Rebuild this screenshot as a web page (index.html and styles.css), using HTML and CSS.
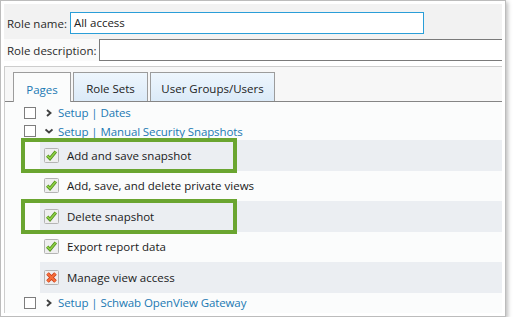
FILE: index.html
```html
<!DOCTYPE html>
<html lang="en">
<head>
<meta charset="UTF-8">
<title>Role editor</title>
<link rel="stylesheet" href="styles.css">
</head>
<body>
<div class="frame">
  <div class="field-row name-row">
    <span class="field-label">Role name:</span>
    <div class="text-input focused">All access</div>
  </div>
  <div class="field-row desc-row">
    <span class="field-label">Role description:</span>
    <div class="text-input wide"></div>
  </div>

  <div class="panel">
    <div class="tabs">
      <div class="tab active tab-pages">Pages</div>
      <div class="tab tab-sets">Role Sets</div>
      <div class="tab tab-groups">User Groups/Users</div>
    </div>

    <div class="tree">
      <div class="node first">
        <span class="box"></span>
        <svg class="chev" width="8" height="8" viewBox="0 0 8 8"><path d="M2 1 L5.5 4 L2 7" fill="none" stroke="#404040" stroke-width="1.9"/></svg>
        <span class="link">Setup | Dates</span>
      </div>
      <div class="node second">
        <span class="box"></span>
        <svg class="chev" width="8" height="8" viewBox="0 0 8 8"><path d="M0.5 2.5 L4 5.5 L7.5 2.5" fill="none" stroke="#404040" stroke-width="1.9"/></svg>
        <span class="link">Setup | Manual Security Snapshots</span>
      </div>

      <div class="leaf shaded">
        <svg class="perm" width="15" height="15" viewBox="0 0 15 15"><rect x="0.5" y="0.5" width="14" height="14" rx="1" fill="#efefef" stroke="#b4b4b4"/><path d="M3.2 7.6 L6 10.6 L11.8 3.6" fill="none" stroke="#4f8d1e" stroke-width="3.2"/><path d="M3.2 7.6 L6 10.6 L11.8 3.6" fill="none" stroke="#8fd043" stroke-width="1.6"/></svg>
        <span>Add and save snapshot</span>
        <div class="callout"></div>
      </div>
      <div class="leaf">
        <svg class="perm" width="15" height="15" viewBox="0 0 15 15"><rect x="0.5" y="0.5" width="14" height="14" rx="1" fill="#efefef" stroke="#b4b4b4"/><path d="M3.2 7.6 L6 10.6 L11.8 3.6" fill="none" stroke="#4f8d1e" stroke-width="3.2"/><path d="M3.2 7.6 L6 10.6 L11.8 3.6" fill="none" stroke="#8fd043" stroke-width="1.6"/></svg>
        <span>Add, save, and delete private views</span>
      </div>
      <div class="leaf shaded">
        <svg class="perm" width="15" height="15" viewBox="0 0 15 15"><rect x="0.5" y="0.5" width="14" height="14" rx="1" fill="#efefef" stroke="#b4b4b4"/><path d="M3.2 7.6 L6 10.6 L11.8 3.6" fill="none" stroke="#4f8d1e" stroke-width="3.2"/><path d="M3.2 7.6 L6 10.6 L11.8 3.6" fill="none" stroke="#8fd043" stroke-width="1.6"/></svg>
        <span>Delete snapshot</span>
        <div class="callout"></div>
      </div>
      <div class="leaf">
        <svg class="perm" width="15" height="15" viewBox="0 0 15 15"><rect x="0.5" y="0.5" width="14" height="14" rx="1" fill="#efefef" stroke="#b4b4b4"/><path d="M3.2 7.6 L6 10.6 L11.8 3.6" fill="none" stroke="#4f8d1e" stroke-width="3.2"/><path d="M3.2 7.6 L6 10.6 L11.8 3.6" fill="none" stroke="#8fd043" stroke-width="1.6"/></svg>
        <span>Export report data</span>
      </div>
      <div class="leaf shaded">
        <svg class="perm" width="15" height="15" viewBox="0 0 15 15"><rect x="0.5" y="0.5" width="14" height="14" rx="1" fill="#efefef" stroke="#b4b4b4"/><path d="M3.5 3.5 L11.5 11.5 M11.5 3.5 L3.5 11.5" fill="none" stroke="#c8391a" stroke-width="3.6"/><path d="M3.5 3.5 L11.5 11.5 M11.5 3.5 L3.5 11.5" fill="none" stroke="#f6703a" stroke-width="2"/></svg>
        <span>Manage view access</span>
      </div>

      <div class="node last">
        <span class="box"></span>
        <svg class="chev" width="8" height="8" viewBox="0 0 8 8"><path d="M2 1 L5.5 4 L2 7" fill="none" stroke="#404040" stroke-width="1.9"/></svg>
        <span class="link">Setup | Schwab OpenView Gateway</span>
      </div>
    </div>
  </div>
</div>
</body>
</html>
```

FILE: styles.css
```css
* {
  box-sizing: border-box;
}

body {
  margin: 0;
  background: #fff;
  font-family: 'Open Sans', 'Noto Sans', sans-serif;
  font-size: 11.5px;
  color: #1a1a1a;
}

.frame {
  width: 506px;
  height: 317px;
  padding: 3px;
  border: 1px solid #bcbcbc;
  background: #fff;
  box-shadow: 2px 2px 4px rgba(0, 0, 0, 0.25);
  overflow: hidden;
  display: flex;
  flex-direction: column;
}

/* 顶部两行输入 */
.field-row {
  display: flex;
  align-items: center;
  gap: 3px;
  padding-left: 3px;
}

.name-row {
  height: 35px;
  background: #f2f2f2;
  padding-top: 3px;
}

.desc-row {
  height: 22px;
  margin-bottom: 5px;
  background: #fafafa;
}

.field-label {
  color: #2a2a2a;
  white-space: nowrap;
}

.text-input {
  height: 22px;
  padding-left: 3px;
  line-height: 20px;
  background: #fff;
  border: 1px solid #7a7a7a;
}

.text-input.focused {
  width: 354px;
  border-color: #2a9ed8;
  color: #222;
}

.text-input.wide {
  flex: 1;
  border-right: none;
}

/* 标签页面板 */
.panel {
  flex: 1;
  border-top: 1px solid #cdcdcd;
  border-left: 1px solid #cdcdcd;
  display: flex;
  flex-direction: column;
}

.tabs {
  height: 35px;
  display: flex;
  align-items: flex-end;
  gap: 2px;
  padding-left: 8px;
  background: #f7f7f7;
  border-bottom: 1px solid #858585;
}

.tab {
  height: 29px;
  display: flex;
  align-items: center;
  justify-content: center;
  padding-top: 3px;
  border: 1px solid #9c9c9c;
  border-bottom: none;
  background: linear-gradient(#eef6fd, #dbeaf8);
  color: #222;
}

.tab.active {
  height: 30px;
  margin-bottom: -1px;
  background: #fbfcfc;
  color: #2179b3;
}

.tab-pages { width: 58px; }
.tab-sets { width: 75px; }
.tab-groups { width: 125px; }

/* 权限树 */
.tree {
  flex: 1;
  background: #fbfcfc;
}

.node {
  display: flex;
  align-items: center;
  padding-left: 19px;
}

.node.first {
  height: 19px;
  margin-top: 1px;
}

.node.second {
  height: 18px;
}

.node.last {
  height: 20px;
}

.box {
  width: 12px;
  height: 12px;
  border: 1px solid #7d7d7d;
  background: #fff;
}

.chev {
  margin: 0 5px 0 9px;
}

.link {
  color: #2179b3;
  white-space: nowrap;
  letter-spacing: -0.1px;
}

.leaf {
  position: relative;
  height: 30.5px;
  margin-left: 35px;
  padding-left: 4px;
  display: flex;
  align-items: center;
  gap: 8px;
  white-space: nowrap;
}

.leaf.shaded {
  background: #ebeef2;
}

.perm {
  flex-shrink: 0;
}

.callout {
  position: absolute;
  left: -19px;
  top: -2px;
  bottom: -2px;
  width: 216px;
  border: 4px solid #6aa530;
}
```
